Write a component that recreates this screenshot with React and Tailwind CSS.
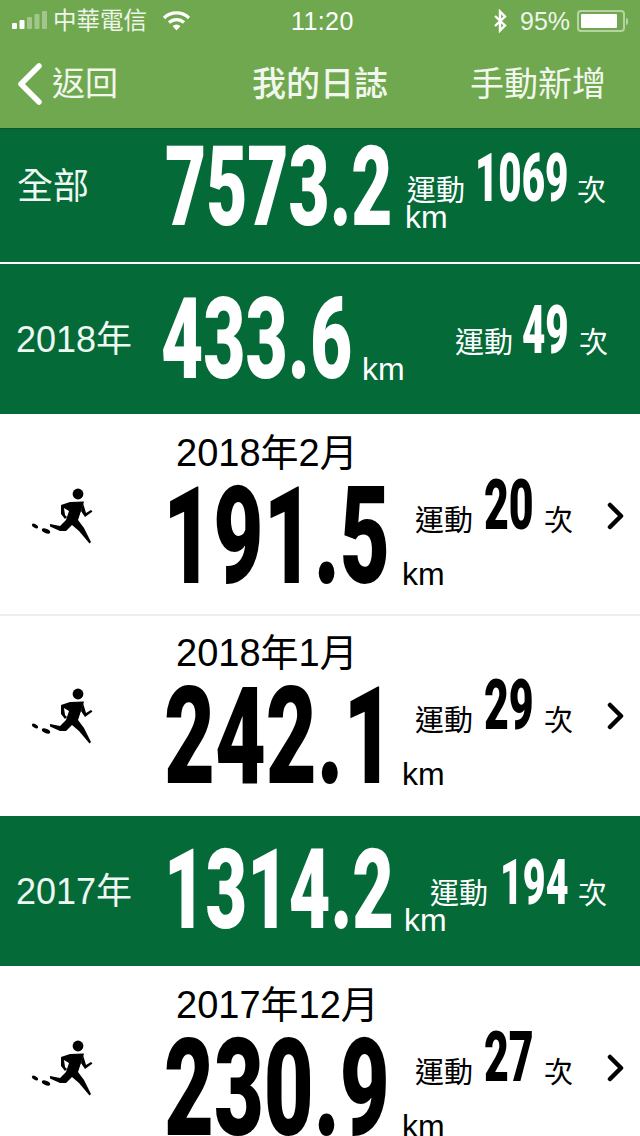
import React from "react";

const SANS = "font-['Liberation_Sans','Noto_Sans_CJK_TC',sans-serif]";
const NUM = "font-['Roboto',sans-serif] font-black block origin-left whitespace-nowrap";

function Chevron() {
  return (
    <svg width="18" height="28" viewBox="0 0 18 28" className="block">
      <path d="M3 3 L14 14 L3 25" fill="none" stroke="#000" strokeWidth="4.500" strokeLinecap="round" strokeLinejoin="round" />
    </svg>
  );
}

function Runner() {
  return (
    <svg width="70" height="66" viewBox="26 484 70 66" className="block">
      <g transform="translate(0 470)" fill="#000">
        <circle cx="78" cy="24" r="5.4" />
        <path d="M61 35 L70 32 L84 31.500 L81 41 L78 50 L84 58 L91 72 L89.500 73.500 L79 61 L72 55 L66 61 L60 61 L50 56.500 L50 54 L60 56 L66 50 L69 41 L64 38 L65 45 L67 47 L65 49 L61 44 Z" />
        <path d="M83 33 L86 43 L91 40 L92.500 41.500 L85 47 L81 41 Z" />
        <ellipse cx="35" cy="56" rx="3.400" ry="1.800" transform="rotate(30 35 56)" />
        <ellipse cx="46" cy="61" rx="4.400" ry="2.200" transform="rotate(22 46 61)" />
      </g>
    </svg>
  );
}

function StatusBar() {
  return (
    <div className={`flex h-[42px] items-center text-white ${SANS}`}>
      <svg width="36" height="22" viewBox="0 0 36 22" className="ml-[11px] block">
        <rect x="1" y="13" width="5" height="6" rx="1" fill="#fff" />
        <rect x="8.500" y="10" width="5" height="9" rx="1" fill="#fff" />
        <rect x="16" y="7" width="5" height="12" rx="1" fill="#fff" fillOpacity="0.35" />
        <rect x="23.500" y="4" width="5" height="15" rx="1" fill="#fff" fillOpacity="0.35" />
        <rect x="31" y="1" width="5" height="18" rx="1" fill="#fff" fillOpacity="0.35" />
      </svg>
      <span className="ml-[6px] w-[109px] text-[23.500px] leading-[30px] text-[#eef5ea]">中華電信</span>
      <svg width="30" height="22" viewBox="0 0 30 22" className="block">
        <path d="M2 8 A18 18 0 0 1 27 8" fill="none" stroke="#fff" strokeWidth="3.200" />
        <path d="M7 12.500 A11 11 0 0 1 22 12.500" fill="none" stroke="#fff" strokeWidth="3.200" />
        <path d="M10.500 16 L14.500 20.500 L18.500 16 A6 6 0 0 0 10.500 16 Z" fill="#fff" />
      </svg>
      <span className="ml-[99px] w-[201px] text-[25px] leading-[30px] font-medium tracking-[0.4px]">11:20</span>
      <svg width="16" height="24" viewBox="0 0 16 24" className="block">
        <path d="M3 7 L13 16.500 L8 21.500 L8 2.500 L13 7.500 L3 17" fill="none" stroke="#fff" strokeWidth="2.400" />
      </svg>
      <span className="ml-[12px] text-[25px] leading-[30px] text-[#eef5ea]">95%</span>
      <div className="ml-[7px] flex items-center">
        <div className="h-[22px] w-[48px] rounded-[4px] border-2 border-[#b5d3a3] p-[2px]">
          <div className="h-full w-[90%] rounded-[1px] bg-white" />
        </div>
        <div className="ml-[1px] h-[7px] w-[2px] rounded-r-[2px] bg-[#b5d3a3]" />
      </div>
    </div>
  );
}

function NavBar() {
  return (
    <div className={`flex h-[86px] items-start text-[#f2f7ee] ${SANS}`}>
      <svg width="28" height="44" viewBox="0 0 28 44" className="ml-[16px] mt-[20px] block">
        <path d="M23 4 L5 22 L23 40" fill="none" stroke="#fff" strokeWidth="5.500" strokeLinecap="round" strokeLinejoin="round" />
      </svg>
      <span className="ml-[8px] mt-[22px] w-[200px] text-[33px] leading-[40px]">返回</span>
      <span className="mt-[22px] w-[218px] text-[34px] leading-[40px] font-medium">我的日誌</span>
      <span className="mt-[22px] text-[34px] leading-[40px]">手動新增</span>
    </div>
  );
}

function Separator() {
  return <div className="h-[2px] bg-white" />;
}

function MonthRow({ date, number, numClass, count, countClass, height, shift }) {
  return (
    <div className={`${height} overflow-hidden bg-white text-black ${SANS}`}>
      <div className={`flex ${shift}`}>
        <div className="w-[166px] shrink-0 pl-[26px] pt-[70px]">
          <Runner />
        </div>
        <div className="w-[236px] shrink-0">
          <div className="mt-[19px] pl-[10px] text-[38px] leading-[40px] whitespace-nowrap">{date}</div>
          <div className="mt-[14px] h-[100px] w-[230px]">
            <span className={`${NUM} text-[136px] leading-[100px] ${numClass}`}>{number}</span>
          </div>
        </div>
        <div className="min-w-0 flex-1">
          <div className="mt-[66px] flex h-[51px] items-start">
            <span className="ml-[13px] mt-[26px] w-[69px] text-[29px] leading-[30px]">運動</span>
            <div className="h-[51px] w-[60px]">
              <span className={`${NUM} text-[70px] leading-[51px] ${countClass}`}>{count}</span>
            </div>
            <span className="mt-[26px] w-[63px] text-[29px] leading-[30px]">次</span>
            <div className="mt-[22px]"><Chevron /></div>
          </div>
          <div className="mt-[28px] text-[32px] leading-[30px]">km</div>
        </div>
      </div>
    </div>
  );
}

export default function App() {
  return (
    <div className="h-[1136px] w-[640px] overflow-hidden bg-white">
      <div className="h-[128px] bg-[#70a84f]">
        <StatusBar />
        <NavBar />
      </div>

      <div className={`flex h-[134px] border-t border-[#05582f] bg-[#046a38] text-white ${SANS}`}>
        <div className="mt-[38px] w-[165px] shrink-0 pl-[17px] text-[36px] leading-[40px] text-[#eef7f1]">全部</div>
        <div className="mt-[18px] h-[81px] w-[242px] shrink-0">
          <span className={`${NUM} text-[111px] leading-[81px] scale-x-[0.64]`}>7573.2</span>
        </div>
        <div className="w-[68px] shrink-0">
          <div className="mt-[47px] text-[29px] leading-[30px]">運動</div>
          <div className="-mt-[4px] -ml-[2px] text-[32px] leading-[30px]">km</div>
        </div>
        <div className="mt-[26px] h-[48px] w-[102px] shrink-0">
          <span className={`${NUM} text-[66px] leading-[48px] scale-x-[0.61]`}>1069</span>
        </div>
        <div className="mt-[47px] text-[29px] leading-[30px]">次</div>
      </div>
      <Separator />

      <div className={`flex h-[150px] bg-[#046a38] text-white ${SANS}`}>
        <div className="mt-[56px] w-[161px] shrink-0 pl-[16px] text-[36px] leading-[40px] text-[#eef7f1]">2018年</div>
        <div className="mt-[34px] h-[83px] w-[201px] shrink-0">
          <span className={`${NUM} text-[114px] leading-[83px] scale-x-[0.64]`}>433.6</span>
        </div>
        <div className="mt-[90px] w-[93px] shrink-0 text-[32px] leading-[30px]">km</div>
        <div className="mt-[64px] w-[67px] shrink-0 text-[29px] leading-[30px]">運動</div>
        <div className="mt-[43px] h-[48px] w-[57px] shrink-0">
          <span className={`${NUM} text-[66px] leading-[48px] scale-x-[0.61]`}>49</span>
        </div>
        <div className="mt-[64px] text-[29px] leading-[30px]">次</div>
      </div>

      <MonthRow height="h-[200px]" shift="mt-0" date="2018年2月" number="191.5" numClass="-ml-[3px] scale-x-[0.637]" count="20" countClass="scale-x-[0.612]" />
      <div className="h-[2px] bg-[#eeeeee]" />
      <MonthRow height="h-[200px]" shift="-mt-[2px]" date="2018年1月" number="242.1" numClass="-ml-[2px] scale-x-[0.646]" count="29" countClass="scale-x-[0.612]" />

      <div className={`flex h-[150px] bg-[#046a38] text-white ${SANS}`}>
        <div className="mt-[56px] w-[164px] shrink-0 pl-[16px] text-[36px] leading-[40px] text-[#eef7f1]">2017年</div>
        <div className="mt-[34px] h-[81px] w-[241px] shrink-0">
          <span className={`${NUM} text-[111px] leading-[81px] scale-x-[0.647]`}>1314.2</span>
        </div>
        <div className="min-w-0 flex-1">
          <div className="mt-[44px] flex h-[46px] items-start">
            <span className="ml-[25px] mt-[19px] w-[70px] text-[29px] leading-[30px]">運動</span>
            <div className="h-[46px] w-[78px]">
              <span className={`${NUM} text-[63px] leading-[46px] scale-x-[0.625]`}>194</span>
            </div>
            <span className="mt-[19px] text-[29px] leading-[30px]">次</span>
          </div>
          <div className="-mt-[1px] -ml-[1px] text-[32px] leading-[30px]">km</div>
        </div>
      </div>

      <MonthRow height="h-[170px]" shift="mt-0" date="2017年12月" number="230.9" numClass="-ml-[2px] scale-x-[0.633]" count="27" countClass="scale-x-[0.612]" />
    </div>
  );
}
